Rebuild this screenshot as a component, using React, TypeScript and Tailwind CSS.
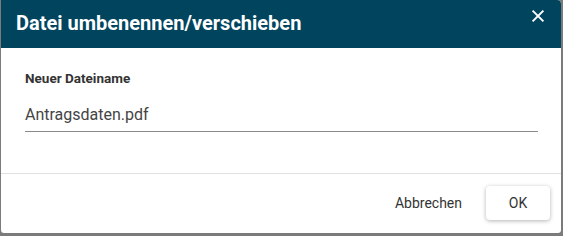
export default function App() {
  return (
    <div
      className="h-[236px] w-[563px] bg-[#7b7b7b] pl-px pr-[2px] pb-[3px]"
      style={{ fontFamily: "Roboto, 'Liberation Sans', sans-serif" }}
    >
      <div className="flex h-full flex-col overflow-hidden rounded-b-[3px] rounded-tr-[4px] bg-white">
        <div className="flex h-12 shrink-0 items-start justify-between bg-[#00445e] pl-[15px] pr-[15px]">
          <h2 className="pt-[11px] text-[20px] font-bold leading-6 text-white">
            Datei umbenennen/verschieben
          </h2>
          <button type="button" aria-label="Schließen" className="mt-[8px] text-white">
            <svg width="16" height="16" viewBox="0 0 24 24" fill="none" stroke="currentColor" strokeWidth="3" strokeLinecap="square">
              <path d="M5 5l14 14M19 5L5 19" />
            </svg>
          </button>
        </div>
        <div className="flex flex-col pl-6 pr-[23px] pt-[20px]">
          <label className="text-[13.5px] font-bold leading-5 text-[#333333]">Neuer Dateiname</label>
          <div className="mt-[17px] border-b border-[#8a8a8a] pb-[6px] text-[16px] leading-5 text-[#444444]">
            Antragsdaten.pdf
          </div>
        </div>
        <div className="mt-auto flex items-center justify-end gap-6 border-t border-[#e0e0e0] pt-[12px] pb-[13px] pr-[11px]">
          <button type="button" className="text-[14px] leading-5 text-[#333333]">Abbrechen</button>
          <button
            type="button"
            className="h-[34px] w-[64px] rounded-[4px] bg-white text-[14px] text-[#333333] shadow-[0_1px_4px_rgba(0,0,0,0.3)]"
          >
            OK
          </button>
        </div>
      </div>
    </div>
  );
}
